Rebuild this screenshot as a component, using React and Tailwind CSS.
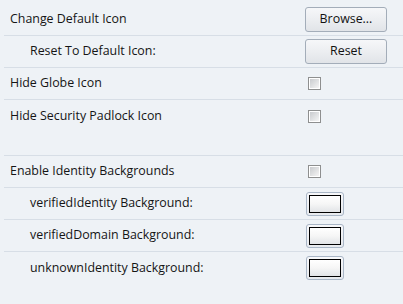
import React from 'react';

const Checkbox = () => (
    <div className="ml-[3px] w-[13px] h-[13px] border border-[#8e8f8f] bg-white p-px">
        <div className="w-full h-full bg-gradient-to-br from-[#c9cbce] to-[#f5f5f5]" />
    </div>
);

const PushButton = ({ children }) => (
    <button className="w-[82px] h-[25px] rounded-[3px] border border-[#a3adb9] bg-gradient-to-b from-[#f6f7f9] via-[#eceef1] to-[#e1e4e8] text-[12.4px] text-[#111] leading-none">
        {children}
    </button>
);

const ColorSwatch = () => (
    <div className="ml-px w-[38px] h-[24px] rounded-[3px] border border-[#a9b6c6] bg-gradient-to-b from-[#f7f8fa] to-[#e7eaee] p-[2px]">
        <div className="w-full h-full border border-black bg-gradient-to-b from-white via-[#f6f6f6] to-[#e2e4e7]" />
    </div>
);

function Row({ label, indent, control, last }) {
    return (
        <div className={`ml-[4px] h-[32px] flex items-center ${last ? '' : 'border-b border-[#d7dee6]'}`}>
            <span className={`flex-1 ${indent ? 'pl-[26px]' : 'pl-[6px]'}`}>{label}</span>
            <div className="w-[98px] flex items-center">{control}</div>
        </div>
    );
}

export default function App() {
    return (
        <div className="w-[403px] h-[304px] overflow-hidden bg-[#eef2f6] pt-[4px] text-[12.4px] text-[#151515] font-['Open_Sans',sans-serif]">
            <Row label="Change Default Icon" control={<PushButton>Browse...</PushButton>} />
            <Row label="Reset To Default Icon:" indent control={<PushButton>Reset</PushButton>} />
            <Row label="Hide Globe Icon" control={<Checkbox />} />
            <Row label="Hide Security Padlock Icon" control={<Checkbox />} last />
            {/* empty gap before the identity group */}
            <div className="ml-[4px] h-[24px] border-b border-[#d7dee6]" />
            <Row label="Enable Identity Backgrounds" control={<Checkbox />} />
            <Row label="verifiedIdentity Background:" indent control={<ColorSwatch />} />
            <Row label="verifiedDomain Background:" indent control={<ColorSwatch />} />
            <Row label="unknownIdentity Background:" indent control={<ColorSwatch />} last />
        </div>
    );
}
